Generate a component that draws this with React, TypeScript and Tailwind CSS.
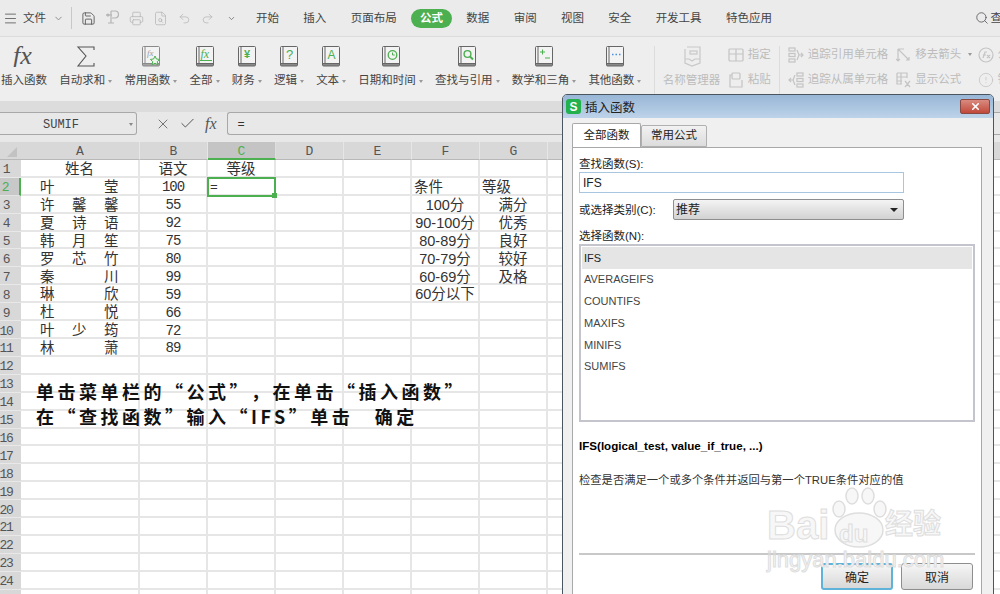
import type { ReactNode } from 'react';
import { Check, ChevronDown, Menu, Printer, Redo2, Save, Search, Undo2, X, FileSearch, CircleAlert } from 'lucide-react';

const COLS = ['A', 'B', 'C', 'D', 'E', 'F', 'G', 'H', 'I', 'J', 'K', 'L', 'M', 'N'];
const TABS = ['开始', '插入', '页面布局', '公式', '数据', '审阅', '视图', '安全', '开发工具', '特色应用'];

const NAMES = [
  ['叶', '', '莹'],
  ['许', '馨', '馨'],
  ['夏', '诗', '语'],
  ['韩', '月', '笙'],
  ['罗', '芯', '竹'],
  ['秦', '', '川'],
  ['琳', '', '欣'],
  ['杜', '', '悦'],
  ['叶', '少', '筠'],
  ['林', '', '萧'],
];
const SCORES = ['100', '55', '92', '75', '80', '99', '59', '66', '72', '89'];
const RANGES = ['100分', '90-100分', '80-89分', '70-79分', '60-69分', '60分以下'];
const GRADES = ['满分', '优秀', '良好', '较好', '及格'];
const FUNCS = ['IFS', 'AVERAGEIFS', 'COUNTIFS', 'MAXIFS', 'MINIFS', 'SUMIFS'];

// ---- Ribbon icons ----------------------------------------------------

function Book({ children, light }: { children?: ReactNode; light?: boolean }) {
  const c = light ? '#8a8a8a' : '#666';
  return (
    <svg width="18" height="21" viewBox="0 0 18 21" fill="none">
      <rect x="0.5" y="0.5" width="17" height="19.5" rx="1" stroke={c} fill="#f3f3f3" />
      <path d="M3 1v16M1 17.5h16" stroke={c} />
      <path d="M1 19h16" stroke={c} strokeWidth="1.5" />
      {children}
    </svg>
  );
}

function FxMark({ x, y, size, color }: { x: number; y: number; size: number; color: string }) {
  return (
    <text x={x} y={y} fontSize={size} fontStyle="italic" fontFamily="'Liberation Serif', serif" fill={color}>
      fx
    </text>
  );
}

function RibbonItem({ icon, label, arrow = true }: { icon: ReactNode; label: string; arrow?: boolean }) {
  return (
    <div className="flex shrink-0 flex-col items-center">
      <div className="flex h-[21px] items-center justify-center">{icon}</div>
      <div className="mt-[6px] flex h-4 items-center text-[11.5px] whitespace-nowrap text-[#444]">
        {label}
        {arrow && <Caret />}
      </div>
    </div>
  );
}

function Caret() {
  return <span className="ml-[3px] h-0 w-0 border-x-[2.5px] border-t-[3px] border-x-transparent border-t-[#999]" />;
}

function GrayRow({ icon, label, arrow }: { icon: ReactNode; label: string; arrow?: boolean }) {
  return (
    <div className="flex h-[25px] items-center gap-1 text-[11.5px] whitespace-nowrap text-[#bcbcbc]">
      {icon}
      {label}
      {arrow && <Caret />}
    </div>
  );
}

function GrayIcon({ children, w = 16 }: { children: ReactNode; w?: number }) {
  return (
    <svg width={w} height="16" viewBox={`0 0 ${w} 16`} fill="none" stroke="#c4c4c4" strokeWidth="1.2">
      {children}
    </svg>
  );
}

function MenuBar() {
  return (
    <div className="flex h-[37px] items-center border-b border-[#dcdcdc] bg-[#ebebeb] text-[11.5px] whitespace-nowrap text-[#444]">
      <Menu size={15} strokeWidth={1.3} className="ml-[3px] shrink-0 text-[#555]" />
      <span className="ml-[5px] shrink-0 pt-[2px]">文件</span>
      <ChevronDown size={11} className="ml-[7px] shrink-0 text-[#888]" />
      <span className="ml-[7px] h-[22px] w-px shrink-0 bg-[#c8c8c8]" />
      <Save size={15} strokeWidth={1.4} className="ml-[9px] shrink-0 text-[#555]" />
      <svg width="15" height="16" viewBox="0 0 15 16" fill="none" stroke="#b4b4b4" strokeWidth="1.2" className="ml-[9px] shrink-0">
        <path d="M6 1h4a3.5 3.5 0 0 1 0 7H7M6 1v12M1 5h6M3 13h6" />
        <circle cx="3" cy="5" r="1" />
      </svg>
      <Printer size={15} strokeWidth={1.2} className="ml-[9px] shrink-0 text-[#b4b4b4]" />
      <FileSearch size={15} strokeWidth={1.2} className="ml-[9px] shrink-0 text-[#b4b4b4]" />
      <Undo2 size={13} strokeWidth={1.3} className="ml-[10px] shrink-0 text-[#b4b4b4]" />
      <Redo2 size={13} strokeWidth={1.3} className="ml-[10px] shrink-0 text-[#b4b4b4]" />
      <ChevronDown size={9} strokeWidth={2} className="ml-[13px] shrink-0 text-[#666]" />
      <div className="ml-[8px] flex shrink-0 items-center gap-[0.33px]">
        {TABS.map((t) =>
          t === '公式' ? (
            <span
              key={t}
              className="mx-[2px] flex h-[19px] items-center rounded-full bg-[#4caf50] px-[9px] pt-[1px] font-bold text-white"
            >
              {t}
            </span>
          ) : (
            <span key={t} className="px-3 pt-[2px]">
              {t}
            </span>
          ),
        )}
      </div>
      <Search size={14} strokeWidth={1.4} className="ml-auto shrink-0 text-[#555]" />
      <span className="-mr-[2px] ml-[2px] shrink-0 pt-[2px]">查</span>
    </div>
  );
}

function Ribbon() {
  const g = '#4caf50';
  return (
    <div className="flex h-[64px] gap-[12.2px] overflow-hidden bg-[#eeeeee] pt-[9px] pl-px">
      <RibbonItem
        arrow={false}
        label="插入函数"
        icon={
          <svg width="24" height="21" viewBox="0 0 24 21">
            <FxMark x={1} y={18} size={26} color="#555" />
          </svg>
        }
      />
      <RibbonItem
        label="自动求和"
        icon={
          <svg width="20" height="21" viewBox="0 0 20 21" fill="none" stroke="#555" strokeWidth="1.1">
            <path d="M18 4V1H2l8 9-8 10h16v-3" />
          </svg>
        }
      />
      <RibbonItem
        label="常用函数"
        icon={
          <Book light>
            <FxMark x={5} y={10} size={9} color="#999" />
            <path d="M13 10l1.4 3 3.2.4-2.3 2.2.6 3.2-2.9-1.6-2.9 1.6.6-3.2-2.3-2.2 3.2-.4z" fill="#eef7ee" stroke={g} />
          </Book>
        }
      />
      <RibbonItem
        label="全部"
        icon={
          <Book>
            <FxMark x={4.5} y={12} size={12} color={g} />
            <path d="M4 14.5h12" stroke={g} />
          </Book>
        }
      />
      <RibbonItem
        label="财务"
        icon={
          <Book>
            <text x="6" y="12" fontSize="11" fill={g} fontWeight="bold" fontFamily="'Liberation Sans', sans-serif">
              ¥
            </text>
          </Book>
        }
      />
      <RibbonItem
        label="逻辑"
        icon={
          <Book>
            <text x="6" y="13" fontSize="13" fill={g} fontFamily="'Liberation Sans', sans-serif">
              ?
            </text>
          </Book>
        }
      />
      <RibbonItem
        label="文本"
        icon={
          <Book>
            <text x="5.5" y="13" fontSize="12" fill={g} fontFamily="'Liberation Sans', sans-serif">
              A
            </text>
          </Book>
        }
      />
      <RibbonItem
        label="日期和时间"
        icon={
          <Book>
            <circle cx="10.5" cy="9" r="4.3" stroke={g} strokeWidth="1.3" />
            <path d="M10.5 6.5V9h2.2" stroke={g} />
          </Book>
        }
      />
      <RibbonItem
        label="查找与引用"
        icon={
          <Book>
            <circle cx="9.5" cy="8" r="3.4" stroke={g} strokeWidth="1.4" />
            <path d="M12 10.5l3 3" stroke={g} strokeWidth="2" />
          </Book>
        }
      />
      <RibbonItem
        label="数学和三角"
        icon={
          <Book>
            <path d="M5 6h5M7.5 3.5v5M10 12h5" stroke={g} />
          </Book>
        }
      />
      <RibbonItem
        label="其他函数"
        icon={
          <Book>
            <path d="M6 8.5h1.5M9.5 8.5H11M13 8.5h1.5" stroke="#4a90e2" strokeWidth="1.4" />
          </Book>
        }
      />
      <span className="h-[55px] w-px shrink-0 bg-[#dcdcdc]" />
      <div className="-ml-[4px] flex shrink-0 flex-col items-center">
        <div className="flex h-[21px] items-center">
          <svg width="20" height="21" viewBox="0 0 20 21" fill="none" stroke="#c8c8c8" strokeWidth="1.2">
            <path d="M5 1h13v12M3 3v14l7 3 8-3v-4h-5l-3 2-3-2H3" />
            <rect x="8" y="5" width="7" height="3" />
          </svg>
        </div>
        <div className="mt-[6px] flex h-4 items-center text-[11.5px] text-[#bcbcbc]">名称管理器</div>
      </div>
      <div className="-mt-[4px] -ml-[4.6px] shrink-0">
        <GrayRow
          label="指定"
          icon={
            <GrayIcon>
              <rect x="1" y="2" width="14" height="12" rx="1" />
              <path d="M1 7h14M8 2v12" />
            </GrayIcon>
          }
        />
        <GrayRow
          label="粘贴"
          icon={
            <GrayIcon>
              <path d="M4 3H2v12h12V8" />
              <rect x="4" y="1" width="8" height="6" rx="1" />
            </GrayIcon>
          }
        />
      </div>
      <span className="-ml-1 h-[55px] w-px shrink-0 bg-[#dcdcdc]" />
      <div className="-mt-[4px] -ml-[4.4px] shrink-0">
        <GrayRow
          label="追踪引用单元格"
          icon={
            <GrayIcon>
              <rect x="1" y="1" width="6" height="3" />
              <rect x="1" y="6.5" width="6" height="3" />
              <rect x="1" y="12" width="6" height="3" />
              <path d="M9 3l2 5-2 5M11 8h4M13 6l2 2-2 2" />
            </GrayIcon>
          }
        />
        <GrayRow
          label="追踪从属单元格"
          icon={
            <GrayIcon>
              <rect x="9" y="1" width="6" height="3" />
              <rect x="9" y="6.5" width="6" height="3" />
              <rect x="9" y="12" width="6" height="3" />
              <path d="M7 3L5 8l2 5M1 8h4M3 6L1 8l2 2" />
            </GrayIcon>
          }
        />
      </div>
      <div className="-mt-[4px] -ml-[4.2px] shrink-0">
        <GrayRow
          arrow
          label="移去箭头"
          icon={
            <GrayIcon w={15}>
              <path d="M2 2v12M2 2l11 11M2 2h6M0 12l2 2 2-2M10 13h3v-3" />
            </GrayIcon>
          }
        />
        <GrayRow
          label="显示公式"
          icon={
            <GrayIcon w={15}>
              <path d="M1 1h10v5M1 1v11h5M1 5h10M1 9h5M5 1v11M9 9l5 6M14 9l-5 6" />
            </GrayIcon>
          }
        />
      </div>
      <div className="-mt-[4px] -ml-[7px] shrink-0">
        <GrayRow
          label="公式求值"
          icon={
            <GrayIcon>
              <circle cx="8" cy="8" r="7" />
              <path d="M5 11l2-6h2M5 8h3M9 8l3 3M12 8l-3 3" />
            </GrayIcon>
          }
        />
        <GrayRow label="错误检查" icon={<CircleAlert size={16} strokeWidth={1.2} className="text-[#c4c4c4]" />} />
      </div>
    </div>
  );
}

function FormulaBar() {
  return (
    <div className="flex h-[23px] items-stretch bg-[#e8e8e8]">
      <div className="flex w-[137px] shrink-0 items-center justify-between rounded-r-[3px] border-y border-r border-[#a8a8a8] pt-[2px] pr-[3px] pl-[43px] font-['Liberation_Mono'] text-[12px] text-[#444]">
        SUMIF
        <span className="h-0 w-0 border-x-[2px] border-t-[3px] border-x-transparent border-t-[#888]" />
      </div>
      <X size={16} strokeWidth={1.2} className="ml-[18px] self-center text-[#555]" />
      <Check size={17} strokeWidth={1.4} className="ml-[8px] self-center text-[#555]" />
      <span className="ml-[9px] self-center font-['Liberation_Serif'] text-[16px] text-[#555] italic">fx</span>
      <div className="ml-[10px] flex flex-1 items-center rounded-l-[3px] border-y border-l border-[#a8a8a8] pt-[2px] pl-[10px] font-['Liberation_Mono'] text-[12px] text-[#333]">
        =
      </div>
    </div>
  );
}

// ---- Sheet -------------------------------------------------------------

function cellContent(col: string, row: number): ReactNode {
  const i = row - 2;
  if (col === 'A') {
    if (row === 1) return <Center>姓名</Center>;
    if (i < NAMES.length) {
      return (
        <div className="flex h-full items-center justify-between px-[19px]">
          {NAMES[i].map((n, k) => (
            <span key={k} className="w-[15px]">
              {n}
            </span>
          ))}
        </div>
      );
    }
  }
  if (col === 'B') {
    if (row === 1) return <Center>语文</Center>;
    if (i < SCORES.length) return <Center mono>{SCORES[i]}</Center>;
  }
  if (col === 'C' && row === 1) return <Center>等级</Center>;
  if (col === 'F') {
    if (row === 2) return <div className="flex h-full items-center pl-[2px]">条件</div>;
    if (row >= 3 && row <= 8) return <Center>{RANGES[row - 3]}</Center>;
  }
  if (col === 'G') {
    if (row === 2) return <div className="flex h-full items-center pl-[2px]">等级</div>;
    if (row >= 3 && row <= 7) return <Center>{GRADES[row - 3]}</Center>;
  }
  return null;
}

function Center({ children, mono }: { children: ReactNode; mono?: boolean }) {
  return (
    <div
      className={
        mono
          ? "flex h-full items-center justify-center font-['Liberation_Mono'] text-[14px] tracking-[-1px]"
          : 'flex h-full items-center justify-center whitespace-nowrap'
      }
    >
      {children}
    </div>
  );
}

function Sheet() {
  const rows = Array.from({ length: 25 }, (_, i) => i + 1);
  return (
    <div className="relative grid grid-cols-[21px_119px_repeat(13,68px)] auto-rows-[17.91px] bg-white text-[14.5px] leading-none text-[#333]">
      <div className="flex h-[18px] items-end justify-end border-b border-[#b8b8b8] bg-[#d8d8d8] pr-[4px] pb-[2px]">
        <span className="h-0 w-0 border-b-[10px] border-l-[10px] border-b-[#c2c2c2] border-l-transparent" />
      </div>
      {COLS.map((c) => (
        <div
          key={c}
          className={
            c === 'C'
              ? "flex h-[18px] items-center justify-center border-r border-b-2 border-r-[#dedede] border-b-[#4caf50] bg-[#c4c4c4] pt-[2px] font-['Liberation_Mono'] text-[13px] text-[#4caf50]"
              : "flex h-[18px] items-center justify-center border-r border-b border-r-[#e6e6e6] border-b-[#b8b8b8] bg-[#d8d8d8] pt-[2px] font-['Liberation_Mono'] text-[13px] text-[#555]"
          }
        >
          {c}
        </div>
      ))}
      {rows.map((r) => (
        <div key={r} className="contents">
          <div
            className={
              r === 2
                ? "flex items-center justify-center border-r-2 border-b border-r-[#4caf50] border-b-[#e2e2e2] bg-[#c8c8c8] pt-[3px] pr-[9px] font-['Liberation_Mono'] text-[13px] tracking-[-1.2px] text-[#4caf50]"
                : "flex items-center justify-center border-b border-b-[#e8e8e8] bg-[#d8d8d8] pt-[3px] pr-[9px] font-['Liberation_Mono'] text-[13px] tracking-[-1.2px] text-[#555]"
            }
          >
            {r}
          </div>
          {COLS.map((c) => (
            <div key={c} className="border-r-2 border-b-2 border-[#e6e6e6] pt-[3px]">
              {cellContent(c, r)}
            </div>
          ))}
        </div>
      ))}

      {/* selected cell C2 */}
      <div className="absolute top-[35px] left-[207px] flex h-[20px] w-[69px] items-center border-2 border-[#4caf50] pt-[1px] pl-[1px] font-['Liberation_Mono'] text-[13px]">
        =
        <span className="absolute -right-[3px] -bottom-[3px] h-[5px] w-[5px] bg-[#4caf50]" />
      </div>

      {/* note typed across the cells */}
      <div className="absolute top-[237px] left-[36px] text-[18px] leading-[24.5px] font-bold tracking-[3.5px] whitespace-nowrap text-[#111] [font-family:'Noto_Sans_CJK_SC',sans-serif] [text-spacing-trim:space-all]">
        <div>单击菜单栏的“公式”，在单击“插入函数”</div>
        <div>在“查找函数”输入“IFS”单击　确定</div>
      </div>
    </div>
  );
}

// ---- Dialog ------------------------------------------------------------

function Watermark() {
  const letters = 'absolute leading-none text-[#f7f7f7] [-webkit-text-stroke:1px_#dedede]';
  return (
    <div className="pointer-events-none absolute top-[392px] left-[203px] h-[90px] w-[190px]">
      <svg width="60" height="62" viewBox="0 0 60 62" fill="#f7f7f7" stroke="#dedede" strokeWidth="1.5" className="absolute top-0 left-[64px]">
        <ellipse cx="9" cy="22" rx="6" ry="8" />
        <ellipse cx="22" cy="9" rx="6" ry="8" />
        <ellipse cx="38" cy="9" rx="6" ry="8" />
        <ellipse cx="50" cy="22" rx="6" ry="8" />
        <ellipse cx="29" cy="43" rx="24" ry="17" />
      </svg>
      <span className={`${letters} top-[18px] left-[1px] font-['Liberation_Sans'] text-[40px] font-bold`}>Bai</span>
      <span className={`${letters} top-[35px] left-[73px] font-['Liberation_Sans'] text-[24px] font-bold`}>du</span>
      <span className={`${letters} top-[24px] left-[119px] text-[28px] font-bold`}>经验</span>
      <span className={`${letters} top-[62px] left-[1px] font-['Liberation_Sans'] text-[22px]`}>jingyan.baidu.com</span>
    </div>
  );
}

function Dialog() {
  return (
    <div className="absolute top-[94px] left-[562px] h-[520px] w-[432px] rounded-t-[5px] border border-[#4a5560] bg-[#f0f0f0] text-[11.5px] text-[#222]">
      <div className="flex h-[23px] items-center rounded-t-[4px] bg-gradient-to-b from-[#98b6d6] to-[#bdd3e9] pl-[3px]">
        <span className="flex h-[15px] w-[15px] items-center justify-center rounded-[3px] bg-[#22b14c] font-['Liberation_Sans'] text-[12px] leading-none font-bold text-white">
          S
        </span>
        <span className="ml-[4px] pt-[3px] text-[12.5px] leading-none text-[#222]">插入函数</span>
        <span className="mr-[3px] ml-auto flex h-[15px] w-[30px] items-center justify-center rounded-[2px] border border-[#8a4a44] bg-gradient-to-b from-[#d98a80] to-[#c0483a]">
          <X size={11} strokeWidth={3.5} className="text-white" />
        </span>
      </div>

      <div className="mt-[6px] ml-[9px] flex h-[23px] items-end">
        <span className="flex h-[24px] w-[69px] items-center justify-center rounded-t-[2px] border border-b-0 border-[#a8a8a8] bg-white">
          全部函数
        </span>
        <span className="flex h-[22px] w-[66px] items-center justify-center rounded-t-[2px] border border-[#b0b0b0] bg-gradient-to-b from-[#f2f2f2] to-[#dcdcdc]">
          常用公式
        </span>
      </div>

      <div className="ml-[9px] h-[480px] w-[410px] border border-[#a8a8a8] bg-white px-[6px] pt-[6px]">
        <div className="h-4 pt-[2px] leading-4">查找函数(S):</div>
        <div className="mt-[2px] flex h-[21px] w-[325px] items-center border border-[#a9c6e0] px-[3px] font-['Liberation_Sans'] text-[12px]">
          IFS
        </div>
        <div className="mt-[6px] flex h-[21px] w-[325px] items-center justify-between">
          <span className="pt-[2px]">或选择类别(C):</span>
          <span className="flex h-[21px] w-[231px] items-center justify-between rounded-[2px] border border-[#8e8e8e] bg-gradient-to-b from-[#f4f4f4] to-[#d2d2d2] pr-[5px] pl-[2px] text-[12px]">
            推荐
            <span className="h-0 w-0 border-x-[4px] border-t-[4px] border-x-transparent border-t-[#222]" />
          </span>
        </div>
        <div className="mt-[6px] h-4 pt-[2px] leading-4">选择函数(N):</div>
        <div className="mt-[2px] h-[178px] w-[396px] border-2 border-[#c4c4cc] p-px font-['Liberation_Sans'] text-[11px] text-[#444]">
          {FUNCS.map((f, i) => (
            <div
              key={f}
              className={
                i === 0
                  ? 'flex h-[21.75px] items-center bg-[#e5e5e5] px-[2px] text-[#222]'
                  : 'flex h-[21.75px] items-center px-[2px]'
              }
            >
              {f}
            </div>
          ))}
        </div>
        <div className="mt-[16px] h-4 font-['Liberation_Sans'] text-[11.6px] leading-4 font-bold text-black">
          IFS(logical_test, value_if_true, ...)
        </div>
        <div className="mt-[18px] h-4 text-[11.3px] leading-4 whitespace-nowrap text-[#333]">
          检查是否满足一个或多个条件并返回与第一个TRUE条件对应的值
        </div>
        <div className="mt-[65px] h-[2px] w-[396px] bg-[#c8c8c8]" />
        <div className="mt-[8px] flex w-[394px] justify-end gap-2">
          <span className="flex h-[27px] w-[72px] items-center justify-center rounded-[3px] border-2 border-[#5fb2d8] bg-gradient-to-b from-[#f6f6f6] to-[#d8d8d8] pt-[2px] text-[12px]">
            确定
          </span>
          <span className="flex h-[27px] w-[72px] items-center justify-center rounded-[3px] border border-[#8e8e8e] bg-gradient-to-b from-[#f6f6f6] to-[#d8d8d8] pt-[2px] text-[12px]">
            取消
          </span>
        </div>
      </div>
      <Watermark />
    </div>
  );
}

export default function App() {
  return (
    <div className="relative h-[594px] w-[1000px] overflow-hidden bg-[#e8e8e8] [font-family:'Liberation_Sans','Noto_Sans_CJK_SC',sans-serif]">
      <MenuBar />
      <Ribbon />
      <div className="h-[11px] bg-[#dcdcdc]" />
      <FormulaBar />
      <div className="h-[7px]" />
      <Sheet />
      <Dialog />
    </div>
  );
}
